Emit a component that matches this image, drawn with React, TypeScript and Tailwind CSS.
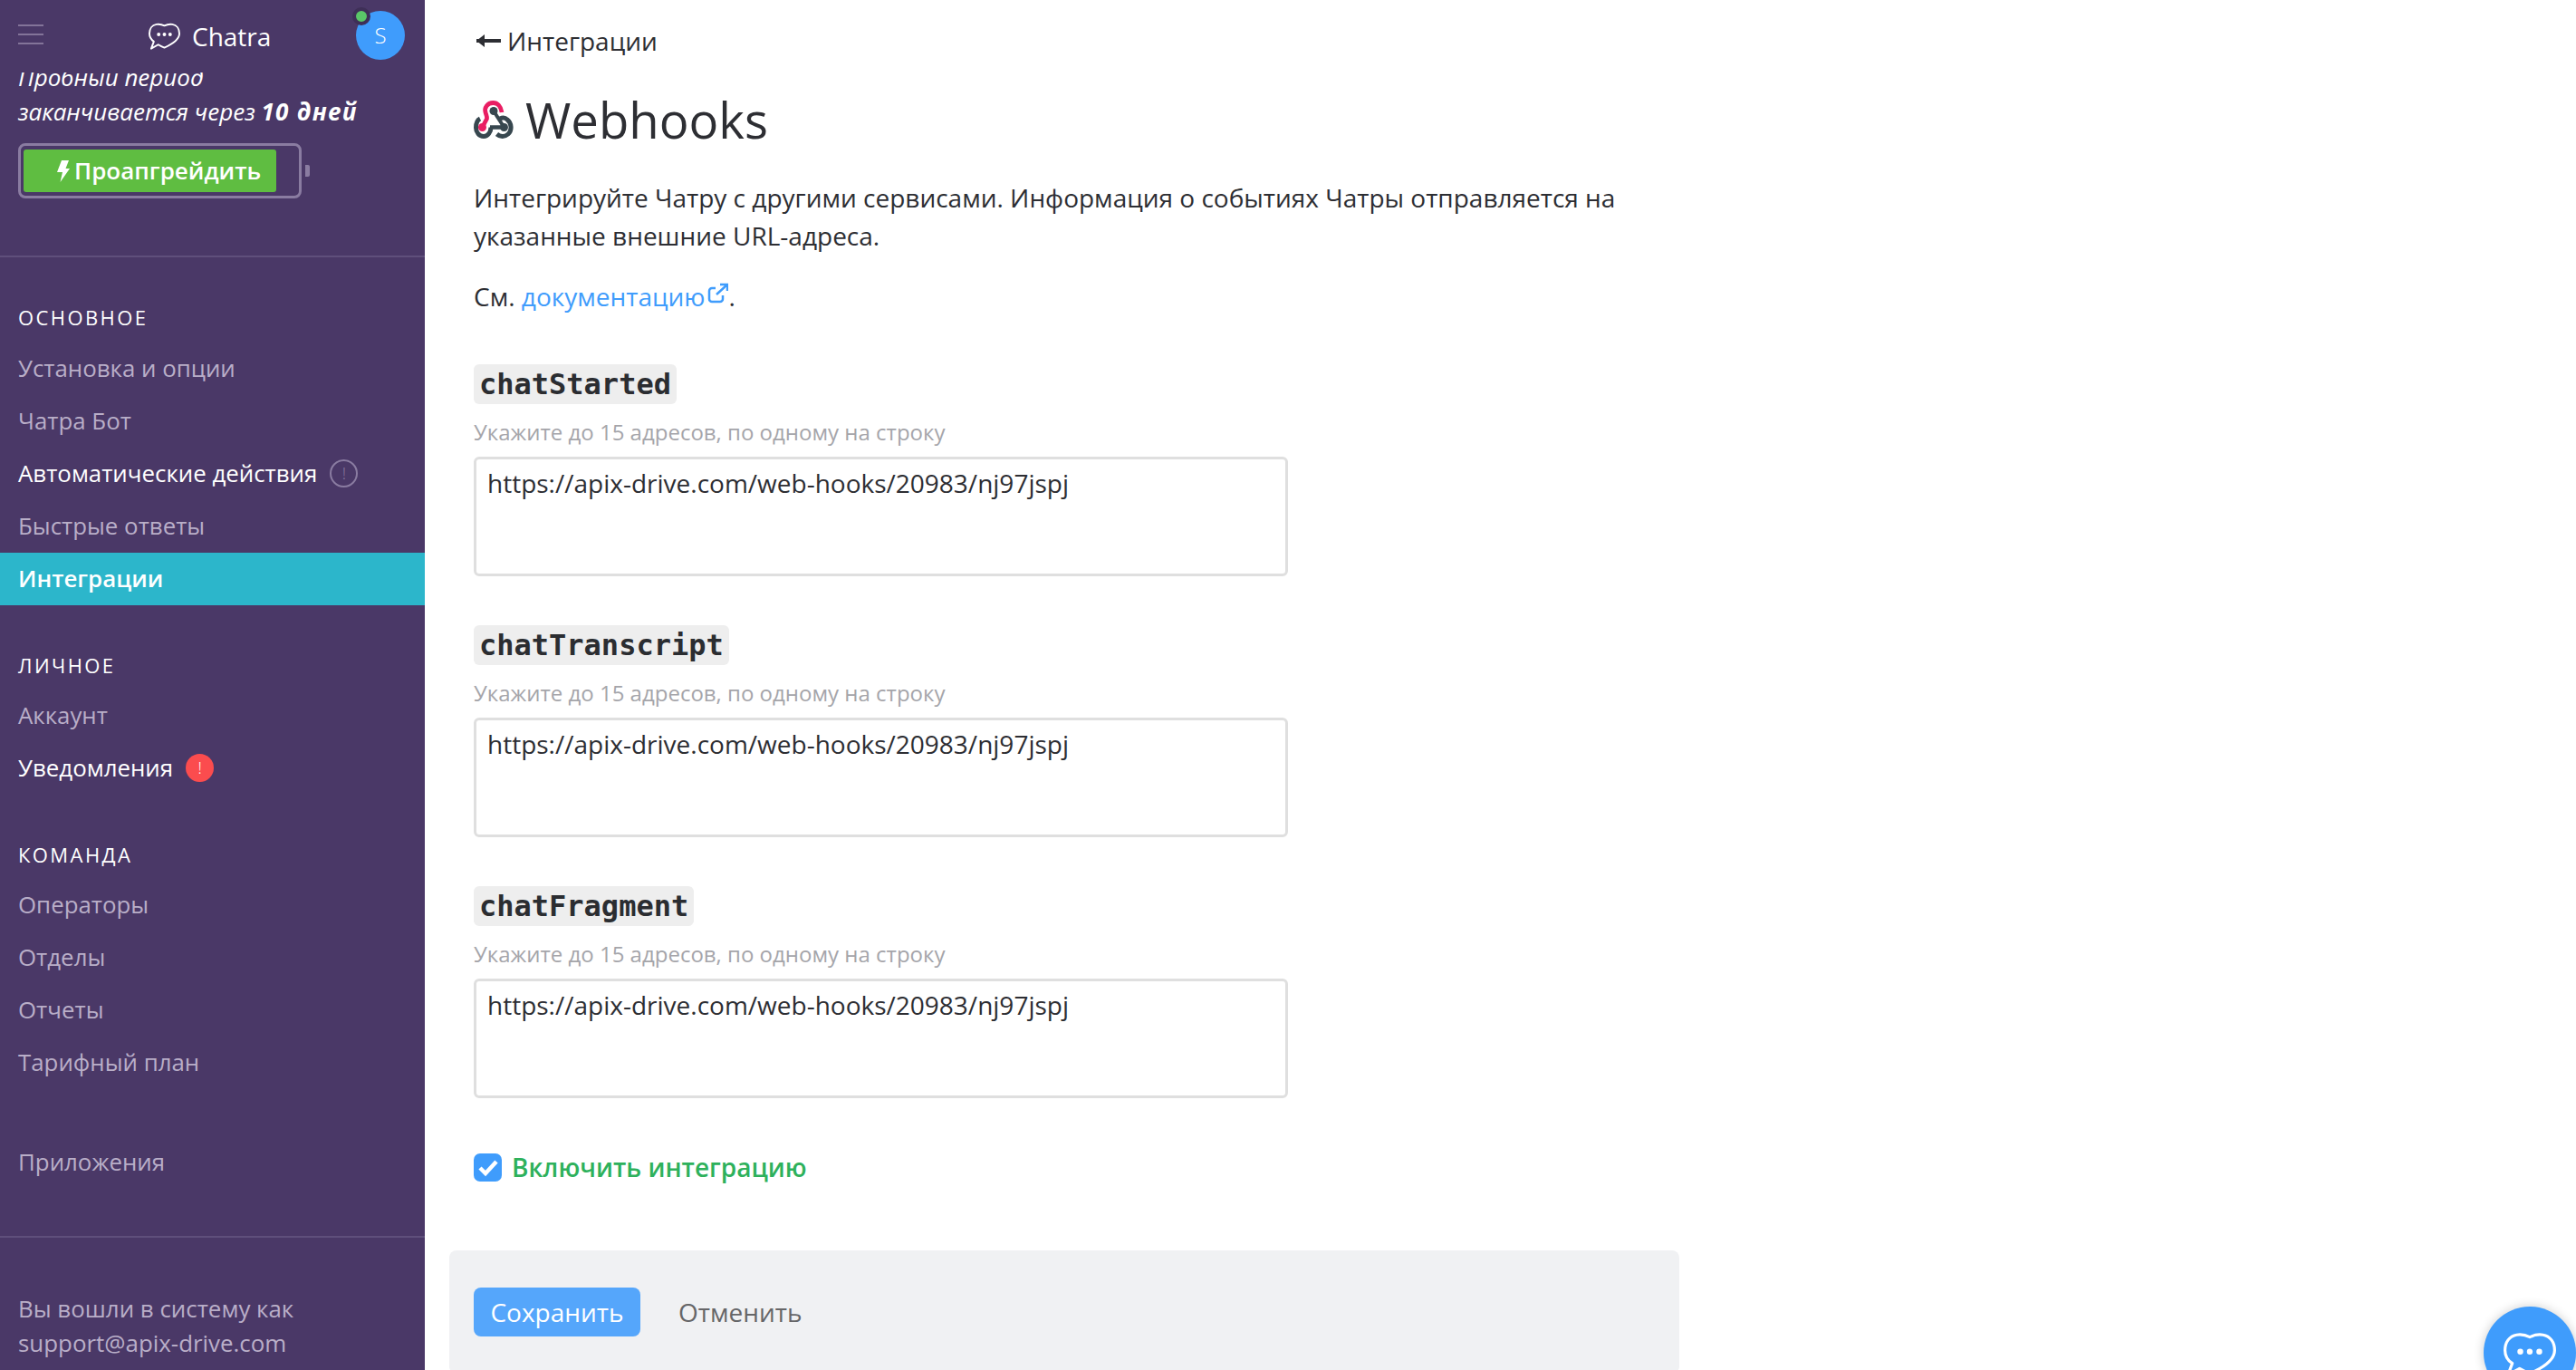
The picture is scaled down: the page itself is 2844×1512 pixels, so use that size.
const sans = { fontFamily: '"Open Sans", sans-serif' };

function ChatLogo({ className }: { className?: string }) {
  return (
    <svg viewBox="0 0 36 30" fill="none" className={className}>
      <path
        d="M18 3C21 1.500 24 1 27 1.500 32 2.300 35 6.500 35 12 35 19 27 24 18 28 15.500 27 13.500 26 11 24.500L3 29l3-8C3 19 1 16 1 12 1 6.500 4 2.300 9 1.500 12 1 15 1.500 18 3Z"
        stroke="currentColor"
        strokeWidth="2"
        strokeLinejoin="round"
      />
      <circle cx="11.500" cy="13" r="2" fill="currentColor" />
      <circle cx="18" cy="13" r="2" fill="currentColor" />
      <circle cx="24.500" cy="13" r="2" fill="currentColor" />
    </svg>
  );
}

function WebhookIcon() {
  return (
    <svg viewBox="0 0 44 42" fill="none" className="w-[44px] h-[42px] shrink-0">
      <path d="M22 11.500 33.500 29.500" stroke="#37474f" strokeWidth="4" />
      <circle cx="22" cy="11.500" r="4.500" fill="#37474f" />
      <circle cx="33.500" cy="29.500" r="4.500" fill="#37474f" />
      <path d="M18 29.500H33.500" stroke="#37474f" strokeWidth="4.500" />
      <path d="M7 20C3 22 2.500 26 2.500 30 2.500 35 6 39.500 11 39.500 15.500 39.500 19 35 19 29.500" stroke="#37474f" strokeWidth="5" />
      <path d="M29 20C32 18.500 35 19 37 21 42 25 42.500 33 38 37 34 40.500 29 40 25.500 37" stroke="#37474f" strokeWidth="5" />
      <path d="M31 13C30 6 26 2.500 21.500 2.500 15 2.500 11.500 8 13 13 13.800 16 15 18 14.500 20L9.500 29.500" stroke="#e91e63" strokeWidth="4.800" />
      <circle cx="9.500" cy="29.500" r="4.500" fill="#e91e63" />
    </svg>
  );
}

function NavItem({ label, bright, active, children }: { label: string; bright?: boolean; active?: boolean; children?: React.ReactNode }) {
  return (
    <div
      className={`flex items-center h-[58px] pl-[20px] pb-[2px] text-[25.85px] ${
        active ? 'bg-[#2cb6cb] text-white font-semibold' : bright ? 'text-white' : 'text-[#b9aec8]'
      }`}
    >
      {label}
      {children}
    </div>
  );
}

function SectionTitle({ label }: { label: string }) {
  return <div className="pl-[20px] text-[22px] leading-[30px] tracking-[0.11em] text-white">{label}</div>;
}

function WebhookField({ name }: { name: string }) {
  return (
    <div className="flex flex-col items-start mb-[54px]">
      <code
        className="h-[44px] px-[6px] flex items-center rounded-[6px] bg-[#eeeeee] text-[32px] font-bold text-[#2b2d31]"
        style={{ fontFamily: '"DejaVu Sans Mono", monospace' }}
      >
        {name}
      </code>
      <div className="mt-[15px] text-[24px] leading-[32px] text-[#a5a5aa]">Укажите до 15 адресов, по одному на строку</div>
      <div className="mt-[11px] w-[899px] h-[132px] rounded-[6px] border-[3px] border-[#dfdfdf] bg-white px-[12px] pt-[7px] text-[28px] leading-[38px] text-[#2d2e33]">
        https://apix-drive.com/web-hooks/20983/nj97jspj
      </div>
    </div>
  );
}

export default function App() {
  return (
    <div className="relative flex h-[1512px] overflow-hidden bg-white" style={sans}>
      {/* Sidebar */}
      <aside className="flex flex-col w-[469px] shrink-0 bg-[#4a3867]">
        <header className="relative z-10 h-[80px] shrink-0 flex items-center bg-[#4a3867] pl-[20px]">
          <div className="flex flex-col gap-[8px] w-[28px] -mt-[4px]">
            <span className="h-[2px] bg-[#837499]" />
            <span className="h-[2px] bg-[#837499]" />
            <span className="h-[2px] bg-[#837499]" />
          </div>
          <div className="flex items-center ml-[116px] text-white">
            <ChatLogo className="w-[35px] h-[30px]" />
            <span className="ml-[13px] text-[28px] leading-none">Chatra</span>
          </div>
          <div className="absolute left-[393px] top-[12px] w-[54px] h-[54px] rounded-full bg-[#3f9cfc] flex items-center justify-center text-white text-[24px] font-light">
            S
            <span className="absolute -left-[4px] -top-[4px] w-[20px] h-[20px] rounded-full bg-[#5ac668] border-[4px] border-[#3e2f57]" />
          </div>
        </header>

        <div className="-mt-[14px] pl-[20px] text-[26px] leading-[38px] italic text-white">
          <div>Пробный период</div>
          <div>
            заканчивается через <span className="font-bold tracking-[0.05em]">10 дней</span>
          </div>
        </div>

        <div className="flex items-center mt-[16px] ml-[20px]">
          <div className="w-[313px] h-[61px] rounded-[8px] border-[3px] border-[#8a7ca1] px-[3px] py-[4px]">
            <div className="w-[279px] h-full rounded-[3px] bg-[#5fbd41] flex items-center pl-[37px] text-white text-[26px] font-semibold">
              <svg viewBox="0 0 14 24" className="w-[14px] h-[24px] mr-[5px] fill-white shrink-0">
                <path d="M5 0h8L9.500 9H14L3.500 24 6 13H0Z" />
              </svg>
              Проапгрейдить
            </div>
          </div>
          <span className="ml-[4px] w-[5px] h-[13px] rounded-r-[2px] bg-[#8a7ca1]" />
        </div>

        <div className="mt-[63px] h-[2px] shrink-0 bg-[#5f4f7b]" />

        <div className="mt-[51px]">
          <SectionTitle label="ОСНОВНОЕ" />
          <div className="mt-[13px]">
            <NavItem label="Установка и опции" />
            <NavItem label="Чатра Бот" />
            <NavItem label="Автоматические действия" bright>
              <span className="ml-[14px] w-[31px] h-[31px] rounded-full border-[2px] border-[#8a7ca1] flex items-center justify-center text-[18px] font-light text-[#8a7ca1]">!</span>
            </NavItem>
            <NavItem label="Быстрые ответы" />
            <NavItem label="Интеграции" active />
          </div>
        </div>

        <div className="mt-[51px]">
          <SectionTitle label="ЛИЧНОЕ" />
          <div className="mt-[12px]">
            <NavItem label="Аккаунт" />
            <NavItem label="Уведомления" bright>
              <span className="ml-[14px] w-[31px] h-[31px] rounded-full bg-[#fb4c4e] flex items-center justify-center text-[18px] font-light text-white">!</span>
            </NavItem>
          </div>
        </div>

        <div className="mt-[51px]">
          <SectionTitle label="КОМАНДА" />
          <div className="mt-[12px]">
            <NavItem label="Операторы" />
            <NavItem label="Отделы" />
            <NavItem label="Отчеты" />
            <NavItem label="Тарифный план" />
          </div>
        </div>

        <div className="mt-[52px]">
          <NavItem label="Приложения" />
        </div>

        <div className="mt-[52px] h-[2px] shrink-0 bg-[#5f4f7b]" />

        <div className="mt-[59px] pl-[20px] text-[25.9px] leading-[38px] text-[#b9aec8]">
          <div>Вы вошли в систему как</div>
          <div>support@apix-drive.com</div>
        </div>
      </aside>

      {/* Main */}
      <main className="flex-1 pl-[54px] text-[#2d2e33]">
        <div className="mt-[25px] flex items-center h-[40px] text-[28px]">
          <span className="relative ml-[3px] w-[27px] h-[4px] bg-[#2d2e33] mr-[7px]">
            <span className="absolute left-0 -top-[5px] border-y-[7px] border-r-[9px] border-y-transparent border-r-[#2d2e33]" />
          </span>
          Интеграции
        </div>

        <h1 className="mt-[35px] flex items-center h-[64px] text-[54.5px] font-normal leading-none text-[#2d2e33]">
          <WebhookIcon />
          <span className="ml-[13px]">Webhooks</span>
        </h1>

        <p className="mt-[33px] w-[1300px] text-[28px] leading-[42px]">
          Интегрируйте Чатру с другими сервисами. Информация о событиях Чатры отправляется на указанные внешние URL-адреса.
        </p>
        <p className="mt-[25px] text-[28px] leading-[42px]">
          См. <span className="text-[#3f9cfc]">документацию</span>
          <svg viewBox="0 0 24 24" fill="none" className="inline-block w-[24px] h-[24px] -mt-[14px] ml-[1px] mr-[1px] text-[#3f9cfc]" stroke="currentColor" strokeWidth="2.500">
            <path d="M18 14v4a3 3 0 0 1-3 3H6a3 3 0 0 1-3-3V9a3 3 0 0 1 3-3h4" />
            <path d="M11 13 22 3M15 2h8v7" />
          </svg>.
        </p>

        <div className="mt-[54px]">
          <WebhookField name="chatStarted" />
          <WebhookField name="chatTranscript" />
          <WebhookField name="chatFragment" />
        </div>

        <label className="mt-[60px] flex items-center h-[32px]">
          <span className="w-[31px] h-[31px] rounded-[7px] bg-[#3f9cfc] flex items-center justify-center">
            <svg viewBox="0 0 24 24" fill="none" className="w-[24px] h-[24px]" stroke="#ffffff" strokeWidth="4.500">
              <path d="M3 13l6 6L21 6" />
            </svg>
          </span>
          <span className="ml-[11px] text-[28px] font-semibold text-[#2eb15c]">Включить интеграцию</span>
        </label>

        <div className="mt-[76px] -ml-[27px] w-[1358px] h-[136px] rounded-[8px] bg-[#f0f1f3] flex items-start pl-[27px] pt-[41px]">
          <button className="w-[184px] h-[54px] rounded-[8px] bg-[#55a6fb] text-white text-[28px]">Сохранить</button>
          <button className="ml-[42px] h-[54px] text-[28px] text-[#666668]">Отменить</button>
        </div>
      </main>

      {/* Chat widget */}
      <div className="absolute left-[2742px] top-[1442px] w-[102px] h-[102px] rounded-full bg-[#3f9cfc] shadow-[0_0_12px_rgba(0,0,0,0.2)] flex justify-center pt-[28px] text-white">
        <ChatLogo className="w-[58px] h-[50px]" />
      </div>
    </div>
  );
}
